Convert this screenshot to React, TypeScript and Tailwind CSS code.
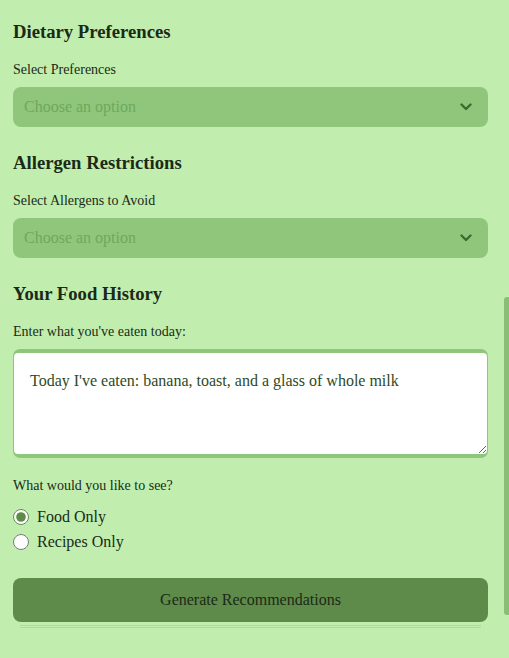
import { useState } from 'react';

function Chevron() {
  return (
    <svg width="12" height="8" viewBox="0 0 12 8" className="shrink-0">
      <path d="M1.5 1.5 L6 6 L10.5 1.5" fill="none" stroke="#3d6b2e" strokeWidth="2.4" strokeLinecap="round" strokeLinejoin="round" />
    </svg>
  );
}

function FakeSelect() {
  return (
    <div className="mt-[9px] h-[40px] w-full rounded-[8px] bg-[#90c67c] flex items-center justify-between pl-[11px] pr-[16px]">
      <span className="text-[16px] text-[#6ea85c]">Choose an option</span>
      <Chevron />
    </div>
  );
}

export default function App() {
  const [mode, setMode] = useState('food');

  return (
    <div
      className="relative min-h-[658px] w-full bg-[#c1eeaf] text-[#1b2a16] overflow-hidden"
      style={{ fontFamily: '"Liberation Serif", "Times New Roman", serif' }}
    >
      <div className="flex flex-col pl-[13px] pr-[21px] pt-[21px]">
        <h3 className="text-[18.7px] font-bold leading-[22px]">Dietary Preferences</h3>
        <label className="mt-[19px] text-[14px] leading-[16px]">Select Preferences</label>
        <FakeSelect />

        <h3 className="mt-[25px] text-[18.7px] font-bold leading-[22px]">Allergen Restrictions</h3>
        <label className="mt-[19px] text-[14px] leading-[16px]">Select Allergens to Avoid</label>
        <FakeSelect />

        <h3 className="mt-[25px] text-[18.7px] font-bold leading-[22px]">Your Food History</h3>
        <label className="mt-[19px] text-[14px] leading-[16px]">Enter what you've eaten today:</label>
        <div className="mt-[9px] rounded-[7px] bg-[#90c67c] px-px py-[4px]">
          <textarea
            className="block h-[101px] w-full resize-y rounded-[4px] bg-white px-[16px] pt-[18px] pb-[14px] text-[16px] leading-[20px] text-[#2e4a25] outline-none"
            style={{ fontFamily: '"Liberation Serif", "Times New Roman", serif' }}
            defaultValue="Today I've eaten: banana, toast, and a glass of whole milk"
          />
        </div>

        <p className="mt-[20px] text-[14px] leading-[16px]">What would you like to see?</p>
        <div className="mt-[10px] flex flex-col">
          <label className="flex h-[25px] items-center gap-[8px] text-[16px]">
            <input
              type="radio"
              name="mode"
              checked={mode === 'food'}
              onChange={() => setMode('food')}
              className="m-0 h-[16px] w-[16px] accent-[#5e8a4a]"
            />
            Food Only
          </label>
          <label className="flex h-[25px] items-center gap-[8px] text-[16px]">
            <input
              type="radio"
              name="mode"
              checked={mode === 'recipes'}
              onChange={() => setMode('recipes')}
              className="m-0 h-[16px] w-[16px] accent-[#5e8a4a]"
            />
            Recipes Only
          </label>
        </div>

        <button className="mt-[24px] h-[44px] w-full rounded-[8px] bg-[#5e8a4a] text-[16px] text-[#1b2a16]">
          Generate Recommendations
        </button>
        <div className="mx-[7px] mt-[3px] h-[3px] border-y border-[#afdc9c]" />
      </div>

      <div className="absolute right-0 top-[297px] h-[318px] w-[5px] rounded-l-[3px] bg-[#8abd75]" />
    </div>
  );
}
